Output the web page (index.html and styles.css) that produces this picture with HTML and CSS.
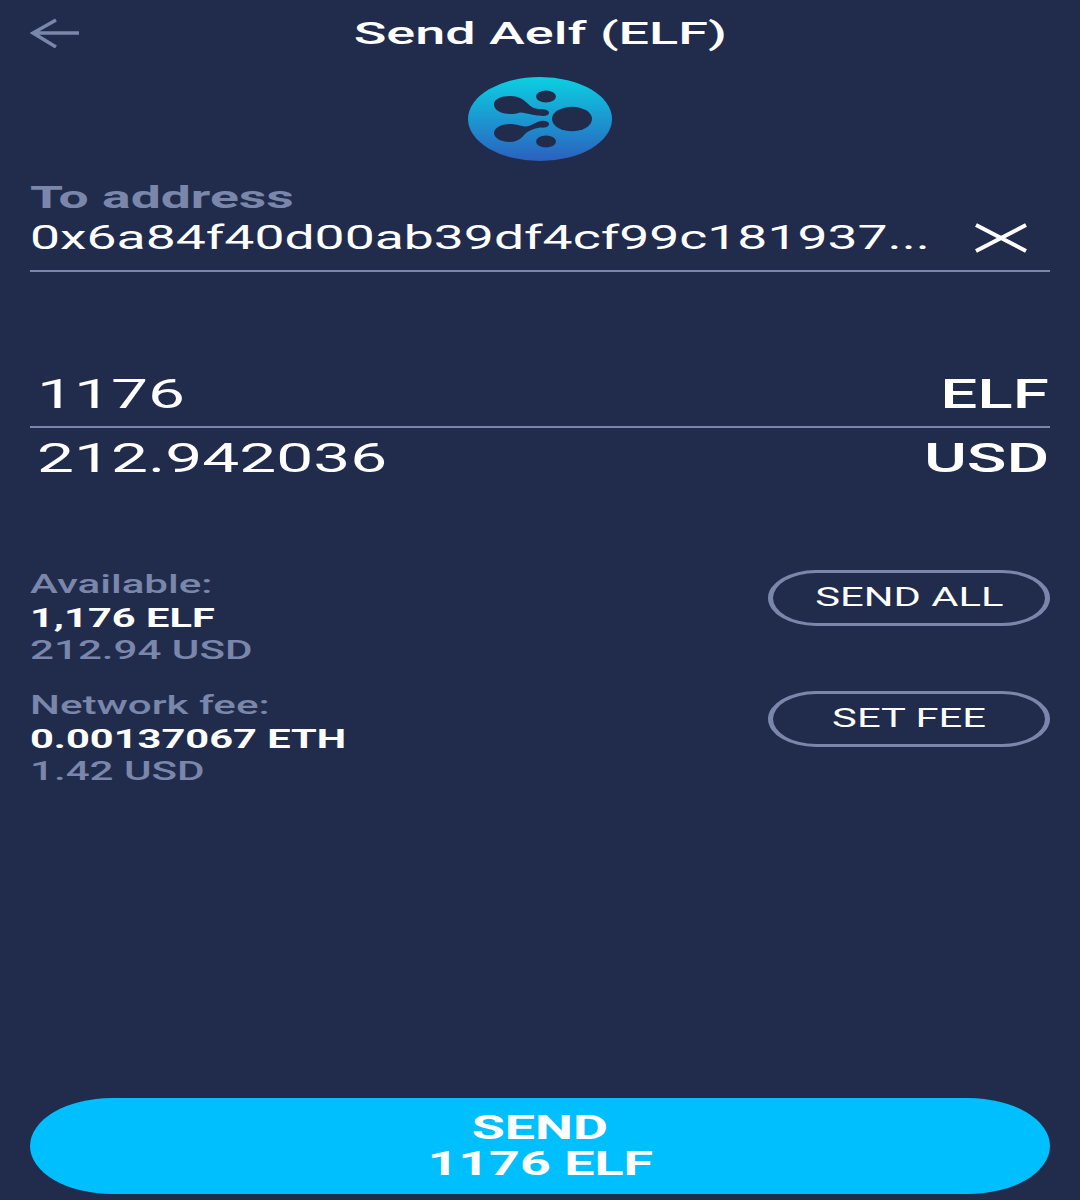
FILE: index.html
```html
<!DOCTYPE html>
<html lang="en">
<head>
    <meta charset="UTF-8">
    <meta name="viewport" content="width=device-width, initial-scale=1.0">
    <title>Send Aelf (ELF)</title>
    <link rel="stylesheet" href="styles.css">
</head>
<body>
    <div class="screen">
        <div class="header">
            <svg class="back" width="50" height="30" viewBox="0 0 50 30">
                <path d="M49 15 H3 M26 2 L3 15 L26 29" fill="none" stroke="#7a86aa" stroke-width="3.5"/>
            </svg>
            <h2 class="title"><span class="wide">Send Aelf (ELF)</span></h2>
        </div>

        <svg class="coin" width="144" height="84" viewBox="0 0 144 84">
            <defs>
                <linearGradient id="coinFill" x1="0" y1="0" x2="0" y2="1">
                    <stop offset="0" stop-color="#0bd0e2"/>
                    <stop offset="1" stop-color="#2b60bf"/>
                </linearGradient>
            </defs>
            <ellipse cx="72" cy="42" rx="72" ry="42" fill="url(#coinFill)"/>
            <g fill="#212c4d">
                <ellipse cx="104" cy="42" rx="20" ry="12.3"/>
                <ellipse cx="78" cy="19.5" rx="10" ry="6"/>
                <ellipse cx="78" cy="64.5" rx="10" ry="6"/>
                <path d="M26 27.5 C26 22 33 19 42 19 C50 19 55 22 59 26 C62 29 66 32 71 32 C75 31.5 81 32.5 81 35.7 C81 39 75 39.5 71 38.5 C65 38.5 60 36 52 35.5 C49 36.5 46 37 42 37 C33 37 26 33 26 27.5 Z"/>
                <path d="M26 56 C26 51 33 47 42 47 C49 47 53 49.5 58 49.5 C63 49 67 45.5 71 44.5 C74 43 81 44 81 47 C81 50.5 76 51 72 50.5 C66 51.5 60 53.5 56 58 C53 62 48 65 42 65 C33 65 26 61 26 56 Z"/>
            </g>
        </svg>

        <div class="address-box">
            <div class="label"><span class="wide">To address</span></div>
            <div class="address-row">
                <span class="wide address">0x6a84f40d00ab39df4cf99c181937...</span>
                <svg class="clear" width="54" height="30" viewBox="0 0 54 30">
                    <path d="M2 2 L52 28 M52 2 L2 28" fill="none" stroke="#fff" stroke-width="4"/>
                </svg>
            </div>
        </div>

        <div class="amount-row first">
            <span class="wide amount">1176</span>
            <span class="wide unit">ELF</span>
        </div>
        <div class="amount-row">
            <span class="wide amount">212.942036</span>
            <span class="wide unit">USD</span>
        </div>

        <div class="info-row available">
            <div class="info">
                <div class="muted"><span class="wide">Available:</span></div>
                <div class="strong"><span class="wide">1,176 ELF</span></div>
                <div class="muted"><span class="wide">212.94 USD</span></div>
            </div>
            <button class="pill"><span class="wide">SEND ALL</span></button>
        </div>
        <div class="info-row">
            <div class="info">
                <div class="muted"><span class="wide">Network fee:</span></div>
                <div class="strong"><span class="wide">0.00137067 ETH</span></div>
                <div class="muted"><span class="wide">1.42 USD</span></div>
            </div>
            <button class="pill"><span class="wide">SET FEE</span></button>
        </div>

        <button class="send">
            <span class="wide">SEND</span><br>
            <span class="wide">1176 ELF</span>
        </button>
    </div>
</body>
</html>
```

FILE: styles.css
```css
* {
    box-sizing: border-box;
}

body {
    margin: 0;
    font-family: Roboto, "Liberation Sans", sans-serif;
    background-color: #212c4d;
    color: white;
}

.screen {
    height: 1200px;
    padding: 0 30px 6px;
    display: flex;
    flex-direction: column;
    overflow: hidden;
}

/* the whole app is stretched sideways in the capture */
.wide {
    display: inline-block;
    white-space: nowrap;
    transform: scaleX(1.62);
    transform-origin: left center;
}

.header {
    height: 66px;
    display: flex;
    align-items: center;
    position: relative;
}

.back {
    position: absolute;
    left: 0;
    top: 18px;
}

.title {
    flex: 1;
    margin: 0;
    padding-top: 2px;
    text-align: center;
    font-size: 31px;
    font-weight: 500;
    line-height: 66px;
}

.title .wide {
    transform: scaleX(1.74);
    transform-origin: center;
}

.coin {
    align-self: center;
    margin-top: 11px;
    flex-shrink: 0;
}

.address-box {
    margin-top: 17px;
    height: 94px;
    border-bottom: 2px solid #7a86aa;
}

.label {
    color: #7a86aa;
    font-size: 32px;
    font-weight: 700;
    line-height: 38px;
}

.label .wide {
    transform: scaleX(1.67);
}

.address-row {
    display: flex;
    justify-content: space-between;
    align-items: center;
    padding-right: 22px;
    height: 43px;
}

.address {
    font-size: 33px;
}

.amount-row {
    display: flex;
    justify-content: space-between;
    align-items: center;
    height: 64px;
    padding: 0 1px 4px 7px;
}

.amount-row.first {
    margin-top: 91px;
    height: 65px;
    padding-bottom: 2px;
    border-bottom: 2px solid #7a86aa;
}

.amount {
    font-size: 41px;
    transform: scaleX(1.605);
}

.unit {
    font-size: 41px;
    font-weight: 500;
    transform: scaleX(1.6);
    transform-origin: right center;
}

.info-row {
    display: flex;
    justify-content: space-between;
    align-items: flex-start;
    height: 121px;
}

.info-row.available {
    margin-top: 76px;
}

.info {
    font-size: 26px;
    line-height: 33px;
    font-weight: 500;
}

.muted {
    color: #7a86aa;
}

.strong {
    font-weight: 700;
    padding-top: 2px;
    line-height: 31px;
}

.strong .wide {
    transform: scaleX(1.6);
}

.pill {
    width: 282px;
    height: 56px;
    margin-top: 2px;
    background: none;
    border-style: solid;
    border-color: #7a86aa;
    border-width: 3px 5px;
    border-radius: 48px / 28px;
    color: white;
    font-family: inherit;
    font-size: 25px;
    padding: 0 0 2px;
}

.pill .wide {
    transform: scaleX(1.67);
    transform-origin: center;
}

.send {
    margin-top: auto;
    height: 96px;
    background-color: #00bfff;
    color: white;
    border: none;
    border-radius: 82px / 48px;
    font-family: inherit;
    font-size: 33px;
    font-weight: 700;
    line-height: 36px;
    padding: 0;
}

.send .wide {
    transform: scaleX(1.63);
    transform-origin: center;
}
```
